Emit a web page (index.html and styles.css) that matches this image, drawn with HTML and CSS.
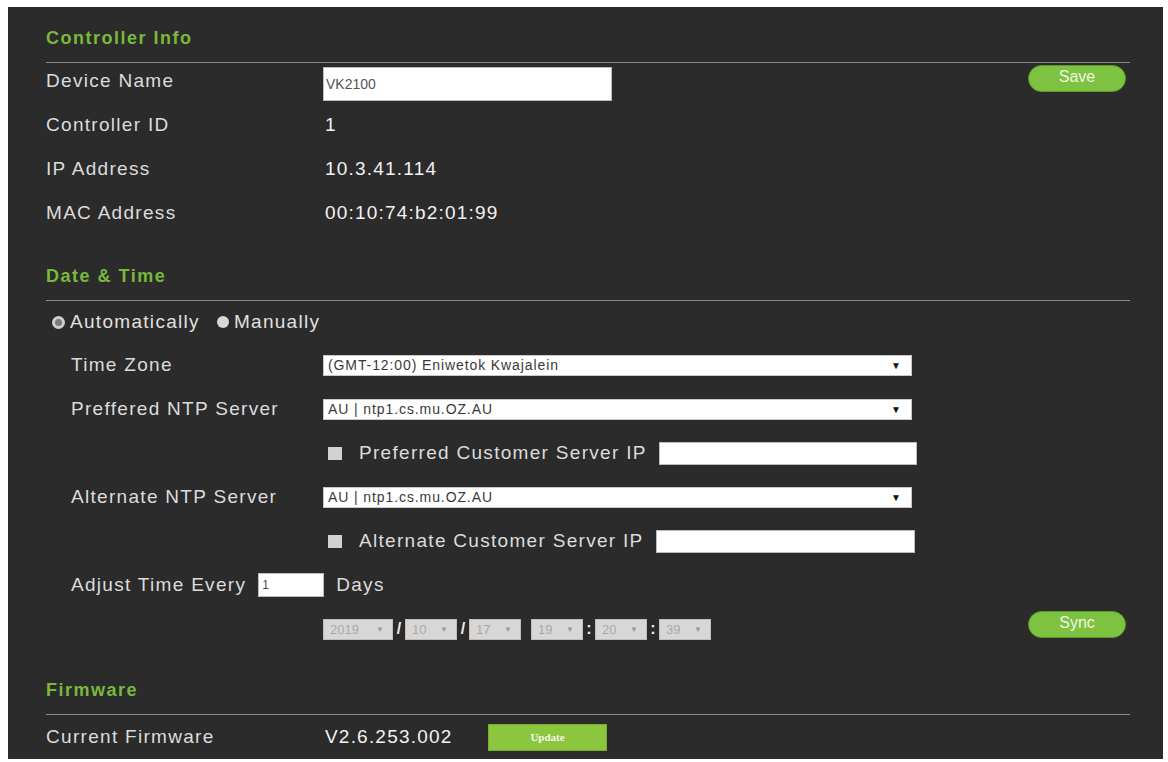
FILE: index.html
```html
<!DOCTYPE html>
<html lang="en">
<head>
    <meta charset="UTF-8">
    <title>Controller Settings</title>
    <link rel="stylesheet" href="styles.css">
</head>
<body>
    <div class="panel">
        <!-- Controller info -->
        <h2 class="group-title first">Controller Info</h2>
        <div class="info-rows">
            <div class="row">
                <span class="label">Device Name</span>
                <input class="name-input" type="text" value="VK2100">
                <button class="pill-btn save-btn">Save</button>
            </div>
            <div class="row">
                <span class="label">Controller ID</span>
                <span class="value">1</span>
            </div>
            <div class="row">
                <span class="label">IP Address</span>
                <span class="value">10.3.41.114</span>
            </div>
            <div class="row">
                <span class="label">MAC Address</span>
                <span class="value">00:10:74:b2:01:99</span>
            </div>
        </div>

        <!-- Date and time -->
        <h2 class="group-title">Date &amp; Time</h2>
        <div class="radio-row">
            <span class="radio radio-on"></span><span class="radio-text">Automatically</span>
            <span class="radio radio-off"></span><span class="radio-text">Manually</span>
        </div>
        <div class="sub-rows">
            <div class="sub-row">
                <span class="sub-label">Time Zone</span>
                <div class="select wide-select">
                    <span>(GMT-12:00) Eniwetok Kwajalein</span>
                    <span class="arrow">&#9660;</span>
                </div>
            </div>
            <div class="sub-row">
                <span class="sub-label">Preffered NTP Server</span>
                <div class="select wide-select">
                    <span>AU | ntp1.cs.mu.OZ.AU</span>
                    <span class="arrow">&#9660;</span>
                </div>
            </div>
            <div class="sub-row check-row">
                <span class="check"></span>
                <span class="check-text">Preferred Customer Server IP</span>
                <input class="ip-input" type="text">
            </div>
            <div class="sub-row">
                <span class="sub-label">Alternate NTP Server</span>
                <div class="select wide-select">
                    <span>AU | ntp1.cs.mu.OZ.AU</span>
                    <span class="arrow">&#9660;</span>
                </div>
            </div>
            <div class="sub-row check-row">
                <span class="check"></span>
                <span class="check-text">Alternate Customer Server IP</span>
                <input class="ip-input ip-alt" type="text">
            </div>
            <div class="sub-row">
                <span class="adjust-label">Adjust Time Every</span>
                <input class="days-input" type="text" value="1">
                <span class="days-text">Days</span>
            </div>
            <div class="sub-row date-row">
                <div class="date-fields">
                    <div class="select small-select year"><span>2019</span><span class="arrow">&#9660;</span></div>
                    <span class="sep">/</span>
                    <div class="select small-select"><span>10</span><span class="arrow">&#9660;</span></div>
                    <span class="sep">/</span>
                    <div class="select small-select"><span>17</span><span class="arrow">&#9660;</span></div>
                    <span class="sep-gap"></span>
                    <div class="select small-select"><span>19</span><span class="arrow">&#9660;</span></div>
                    <span class="sep">:</span>
                    <div class="select small-select"><span>20</span><span class="arrow">&#9660;</span></div>
                    <span class="sep">:</span>
                    <div class="select small-select"><span>39</span><span class="arrow">&#9660;</span></div>
                </div>
                <button class="pill-btn sync-btn">Sync</button>
            </div>
        </div>

        <!-- Firmware -->
        <h2 class="group-title last">Firmware</h2>
        <div class="row fw-row">
            <span class="label">Current Firmware</span>
            <span class="value fw-value">V2.6.253.002</span>
            <button class="update-btn">Update</button>
        </div>
    </div>
</body>
</html>
```

FILE: styles.css
```css
body {
    margin: 7px 0 0 8px;
    background-color: #ffffff;
    font-family: "Liberation Sans", Arial, sans-serif;
}

.panel {
    box-sizing: border-box;
    width: 1155px;
    padding: 0 33px 0 38px;
    background-color: #2b2b2b; /* dark grey panel */
    color: #dedede;
}

.group-title {
    margin: 0;
    padding: 31px 0 14px;
    line-height: 20px;
    font-size: 18px;
    font-weight: bold;
    letter-spacing: 1.5px;
    color: #78b83c; /* green headings */
    border-bottom: 1px solid #8a8a8a;
}

.group-title.first {
    padding-top: 21px;
}

.group-title.last {
    padding-top: 29px;
}

.info-rows {
    margin-top: -4px;
}

.row {
    display: flex;
    align-items: center;
    height: 44px;
}

.label {
    width: 277px;
    flex-shrink: 0;
    font-size: 19px;
    letter-spacing: 1.3px;
    color: #dcdcdc;
}

.value {
    padding-left: 2px;
    font-size: 19px;
    letter-spacing: 1.2px;
    color: #f2f2f2;
}

.name-input {
    box-sizing: border-box;
    align-self: flex-start;
    margin-top: 8px;
    width: 289px;
    height: 34px;
    padding: 0 2px;
    border: 1px solid #bbb;
    background: #fff;
    font-family: "Liberation Sans", Arial, sans-serif;
    font-size: 14px;
    color: #555;
}

.pill-btn {
    box-sizing: border-box;
    width: 98px;
    height: 27px;
    margin-left: auto;
    margin-right: 4px;
    border: 1px solid #5c9a22;
    border-radius: 14px;
    background-color: #7ec241;
    color: #eef7e2;
    font-family: "Liberation Sans", Arial, sans-serif;
    font-size: 16px;
    padding: 0 0 3px;
}

.save-btn {
    align-self: flex-start;
    margin-top: 6px;
}

/* radio line */
.radio-row {
    display: flex;
    align-items: center;
    height: 42px;
    padding-left: 6px;
    font-size: 19px;
    letter-spacing: 1.3px;
}

.radio {
    box-sizing: border-box;
    width: 12px;
    height: 12px;
    border-radius: 50%;
    margin-right: 5px;
}

.radio-on {
    width: 13px;
    height: 13px;
    border: 3px solid #cfcfcf;
    background: #7a7a7a;
}

.radio-off {
    background: #d8d8d8;
    margin-left: 17px;
}

.radio-text {
    color: #e0e0e0;
}

/* indented rows */
.sub-rows {
    padding-left: 25px;
}

.sub-row {
    display: flex;
    align-items: center;
    height: 44px;
}

.sub-label {
    width: 252px;
    flex-shrink: 0;
    font-size: 19px;
    letter-spacing: 1.3px;
    color: #dcdcdc;
}

.select {
    box-sizing: border-box;
    display: flex;
    align-items: center;
    justify-content: space-between;
    background: #fff;
    border: 1px solid #c8c8c8;
    color: #3a3a3a;
}

.wide-select {
    width: 589px;
    height: 21px;
    padding: 0 10px 0 4px;
    font-size: 14px;
    letter-spacing: 0.9px;
}

.arrow {
    font-size: 10px;
    letter-spacing: 0;
    color: #111;
}

.check-row {
    padding-left: 257px;
}

.check {
    width: 14px;
    height: 13px;
    background: #d2d2d2;
    margin-right: 17px;
}

.check-text {
    font-size: 19px;
    letter-spacing: 1.3px;
    color: #dcdcdc;
}

.ip-input {
    box-sizing: border-box;
    width: 258px;
    height: 23px;
    margin-left: 12px;
    border: 1px solid #bbb;
    background: #fff;
}

.ip-alt {
    width: 259px;
}

.adjust-label {
    font-size: 19px;
    letter-spacing: 1.3px;
    color: #dcdcdc;
}

.days-input {
    box-sizing: border-box;
    width: 66px;
    height: 24px;
    margin-left: 12px;
    padding: 0 3px;
    border: 1px solid #bbb;
    font-family: "Liberation Sans", Arial, sans-serif;
    font-size: 12px;
    color: #444;
}

.days-text {
    margin-left: 12px;
    font-size: 19px;
    letter-spacing: 1.3px;
    color: #dcdcdc;
}

/* date and time selectors */
.date-row {
    padding-left: 252px;
}

.date-fields {
    display: flex;
    align-items: center;
}

.small-select {
    width: 52px;
    height: 21px;
    padding: 0 8px 0 6px;
    background: #d7d7d7;
    border-color: #bdbdbd;
    color: #a9a9a9;
    font-size: 13px;
}

.small-select.year {
    width: 70px;
}

.small-select .arrow {
    font-size: 8px;
    color: #9a9a9a;
}

.sep {
    width: 12px;
    text-align: center;
    font-size: 16px;
    font-weight: bold;
    color: #eee;
}

.sep-gap {
    width: 10px;
}

.sync-btn {
    align-self: flex-start;
    margin-top: 4px;
}

/* firmware */
.fw-value {
    width: 163px;
}

.update-btn {
    width: 119px;
    height: 27px;
    border: 1px solid #79ad2c;
    background: #8cc63f;
    color: #f3f9ea;
    font-family: "Liberation Serif", serif;
    font-size: 11px;
    font-weight: bold;
    padding: 0;
}
```
